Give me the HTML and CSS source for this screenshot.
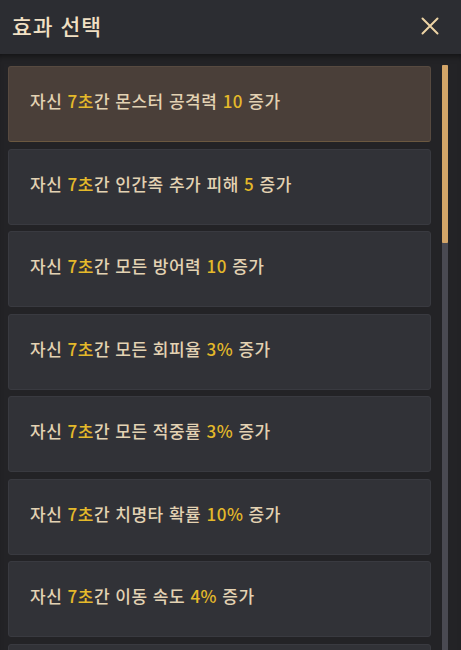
FILE: index.html
```html
<!DOCTYPE html>
<html lang="ko">
<head>
<meta charset="utf-8">
<link rel="stylesheet" href="styles.css">
</head>
<body>
<div class="panel">
  <header class="head">
    <h1 class="title">효과 선택</h1>
    <svg class="close" width="18" height="18" viewBox="0 0 18 18"><path d="M1.5 1.5 L16.5 16.5 M16.5 1.5 L1.5 16.5" stroke="#ecd3a4" stroke-width="2" stroke-linecap="round" fill="none"/></svg>
  </header>
  <div class="body">
    <ul class="list">
      <li class="item active">자신 <b>7초</b>간 몬스터 공격력 <b>10</b> 증가</li>
      <li class="item">자신 <b>7초</b>간 인간족 추가 피해 <b>5</b> 증가</li>
      <li class="item">자신 <b>7초</b>간 모든 방어력 <b>10</b> 증가</li>
      <li class="item">자신 <b>7초</b>간 모든 회피율 <b>3%</b> 증가</li>
      <li class="item">자신 <b>7초</b>간 모든 적중률 <b>3%</b> 증가</li>
      <li class="item">자신 <b>7초</b>간 치명타 확률 <b>10%</b> 증가</li>
      <li class="item">자신 <b>7초</b>간 이동 속도 <b>4%</b> 증가</li>
      <li class="item"></li>
    </ul>
    <div class="scroll"><div class="thumb"></div></div>
  </div>
</div>
</body>
</html>
```
FILE: styles.css
```css
html, body { margin: 0; padding: 0; }
body {
  width: 461px; height: 650px; overflow: hidden;
  background: #232327;
  font-family: "Noto Sans CJK KR", "Noto Sans", sans-serif;
}
.panel { display: flex; flex-direction: column; height: 650px; }
.head {
  height: 54px; flex: none;
  background: #2c2d32;
  display: flex; align-items: center; justify-content: space-between;
  padding: 0 22px 0 12px;
  box-sizing: border-box;
}
.title {
  margin: 0; font-size: 21.5px; font-weight: 500; color: #f1e0c4;
  letter-spacing: 1px; line-height: 1; position: relative; top: -1px;
}
.close { position: relative; top: -1px; }
.body {
  flex: 1; display: flex; overflow: hidden;
  background: #232326;
  box-shadow: inset 0 6px 6px -4px rgba(0,0,0,0.5);
}
.list {
  list-style: none; margin: 0; padding: 12px 0 0 8px;
  width: 423px; flex: none;
  display: flex; flex-direction: column; gap: 6.5px;
}
.item {
  height: 76px; flex: none; box-sizing: border-box;
  background: #313237;
  border: 1px solid #393a40;
  border-radius: 3px;
  display: flex; align-items: center;
  padding-left: 21px; padding-bottom: 7px;
  font-size: 17px; font-weight: 500; color: #e3d2b3;
  letter-spacing: 0.5px;
  white-space: pre;
}
.item b { font-weight: 500; color: #e4b92a; }
.item.active {
  background: #4a3f39;
  border-color: #574a40;
  border-bottom-color: #6b5840;
}
.scroll {
  margin: 11px 0 0 11px;
  width: 6px; flex: none;
  background: #4a4a52;
  border-radius: 1px;
  height: 620px;
}
.thumb { height: 178px; background: #d3a568; border-radius: 1px; }
```
